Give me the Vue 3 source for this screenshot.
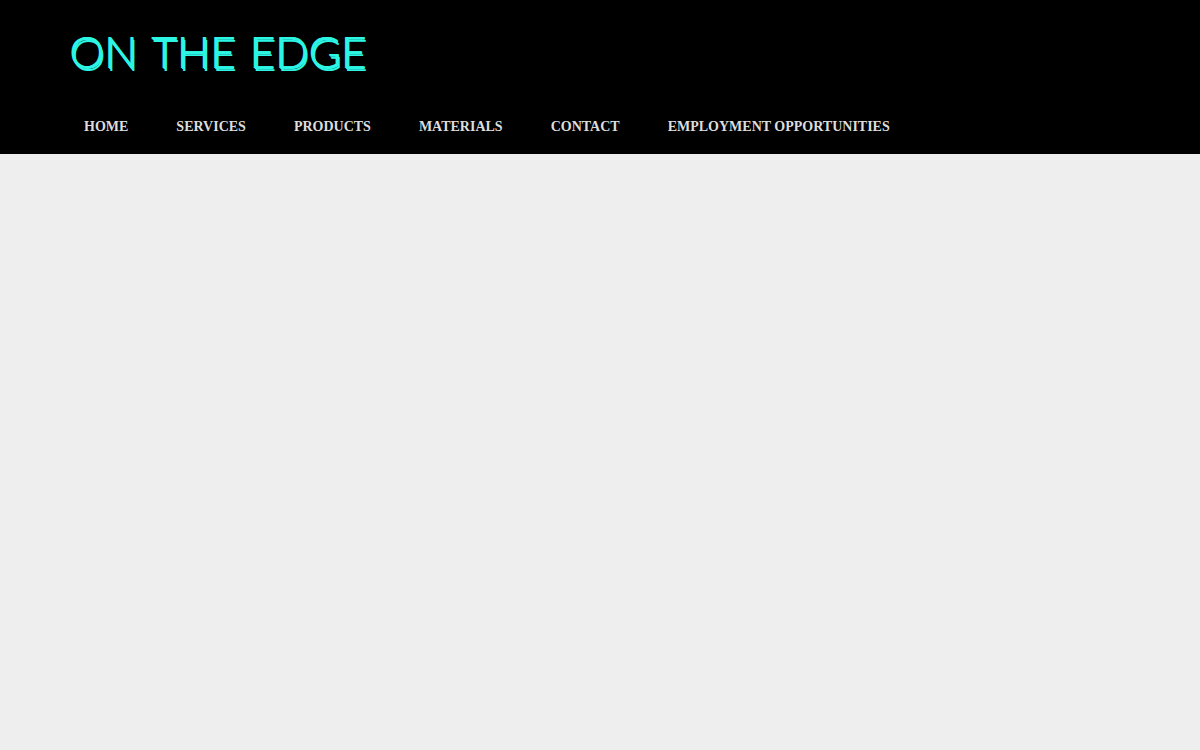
<script setup>
const words = ['ON', 'THE', 'EDGE']
const links = ['Home', 'Services', 'Products', 'Materials', 'Contact', 'Employment Opportunities']
</script>

<template>
  <header class="header">
    <a class="brand" href="#" aria-label="On the Edge">
      <span v-for="word in words" :key="word">{{ word }}</span>
    </a>
    <nav class="nav">
      <a v-for="link in links" :key="link" href="#">{{ link }}</a>
    </nav>
  </header>
</template>

<style>
body {
  background: #eee;
}
</style>

<style scoped>
.header {
  padding: 16px 5% 0;
  background: #000;
}
.brand {
  display: inline-flex;
  gap: 14px;
  margin-left: 9px;
  color: #2cf5e4;
  font: 300 44px/70px Lato, sans-serif;
  text-decoration: none;
  text-shadow: 1px 0 0 #2cf5e4, 1px 1px 0 #2cf5e4, 2px 3px 0 #2cf5e4;
  vertical-align: top;
}
.nav {
  display: flex;
  flex-wrap: wrap;
  padding: 14px 0 0;
}
.nav a {
  padding: 19px 24px;
  color: #ddd;
  font: 700 14px/16px "Liberation Serif", serif;
  text-decoration: none;
  text-transform: uppercase;
}
</style>
